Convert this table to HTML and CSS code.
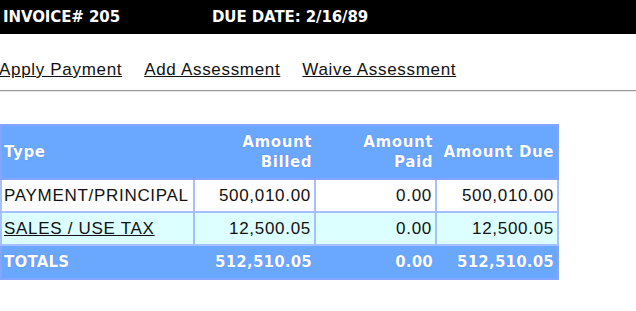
FILE: index.html
```html
<!DOCTYPE html>
<html>
<head>
<meta charset="utf-8">
<link rel="stylesheet" href="styles.css">
</head>
<body>
<div class="titlebar">
  <span class="inv">INVOICE# 205</span>
  <span class="due">DUE DATE: 2/16/89</span>
</div>
<nav class="actions">
  <a href="#">Apply Payment</a>
  <a href="#">Add Assessment</a>
  <a href="#">Waive Assessment</a>
</nav>
<div class="rule"></div>
<table class="grid">
  <colgroup>
    <col class="c1"><col class="c2"><col class="c3"><col class="c4">
  </colgroup>
  <thead>
    <tr>
      <th class="left">Type</th>
      <th>Amount<br>Billed</th>
      <th>Amount<br>Paid</th>
      <th>Amount Due</th>
    </tr>
  </thead>
  <tbody>
    <tr class="odd">
      <td class="left">PAYMENT/PRINCIPAL</td>
      <td>500,010.00</td>
      <td>0.00</td>
      <td>500,010.00</td>
    </tr>
    <tr class="even">
      <td class="left"><a href="#">SALES / USE TAX</a></td>
      <td>12,500.05</td>
      <td>0.00</td>
      <td>12,500.05</td>
    </tr>
  </tbody>
  <tfoot>
    <tr>
      <th class="left">TOTALS</th>
      <th>512,510.05</th>
      <th>0.00</th>
      <th>512,510.05</th>
    </tr>
  </tfoot>
</table>
</body>
</html>
```
FILE: styles.css
```css
html, body {
  margin: 0;
  padding: 0;
  background: #fff;
}
body {
  font-family: "Liberation Sans", Arial, sans-serif;
  color: #111;
}
.titlebar {
  height: 34px;
  background: #000;
  color: #fff;
  display: flex;
  align-items: center;
  padding-left: 3px;
  font-family: "DejaVu Sans", Verdana, sans-serif;
  font-weight: bold;
  font-size: 15px;
  letter-spacing: -0.1px;
}
.titlebar .inv {
  width: 209px;
}
.actions {
  display: flex;
  gap: 22px;
  margin-top: 26px;
  margin-left: -1px;
  font-size: 17px;
  line-height: 20px;
  letter-spacing: 0.68px;
}
.actions a {
  color: #111;
  text-decoration: underline;
}
.rule {
  margin-top: 10px;
  height: 1px;
  border-top: 1px solid #9a9a9a;
  background: #e4e4e4;
}
.grid {
  margin-top: 32px;
  border-collapse: collapse;
  table-layout: fixed;
  width: 557px;
  border: 2px solid #84a4ff;
  font-size: 17px;
  letter-spacing: 0.7px;
}
.grid .c1 { width: 193px; }
.grid .c2 { width: 121px; }
.grid .c3 { width: 121px; }
.grid .c4 { width: 122px; }
.grid th, .grid td {
  padding: 0 3px 0 2px;
  text-align: right;
  white-space: nowrap;
}
.grid .left {
  text-align: left;
}
.grid thead th, .grid tfoot th {
  background: #6aa8ff;
  color: #fff;
  font-family: "DejaVu Sans", Verdana, sans-serif;
  font-weight: bold;
  font-size: 15px;
  letter-spacing: 0.6px;
  text-shadow: 0 0 1px #4f6fff;
  border: 0;
}
.grid thead th {
  height: 52px;
  line-height: 20px;
  padding-top: 0;
  border-bottom: 2px solid #84a4ff;
}
.grid tfoot th {
  height: 32px;
  letter-spacing: 0.2px;
  border-top: 2px solid #84a4ff;
}
.grid td {
  height: 31px;
  border: 2px solid #a6c0ff;
}
.grid tr.odd td {
  background: #fff;
}
.grid tr.even td {
  background: #dcffff;
}
.grid td a {
  color: #111;
  text-decoration: underline;
}
```
